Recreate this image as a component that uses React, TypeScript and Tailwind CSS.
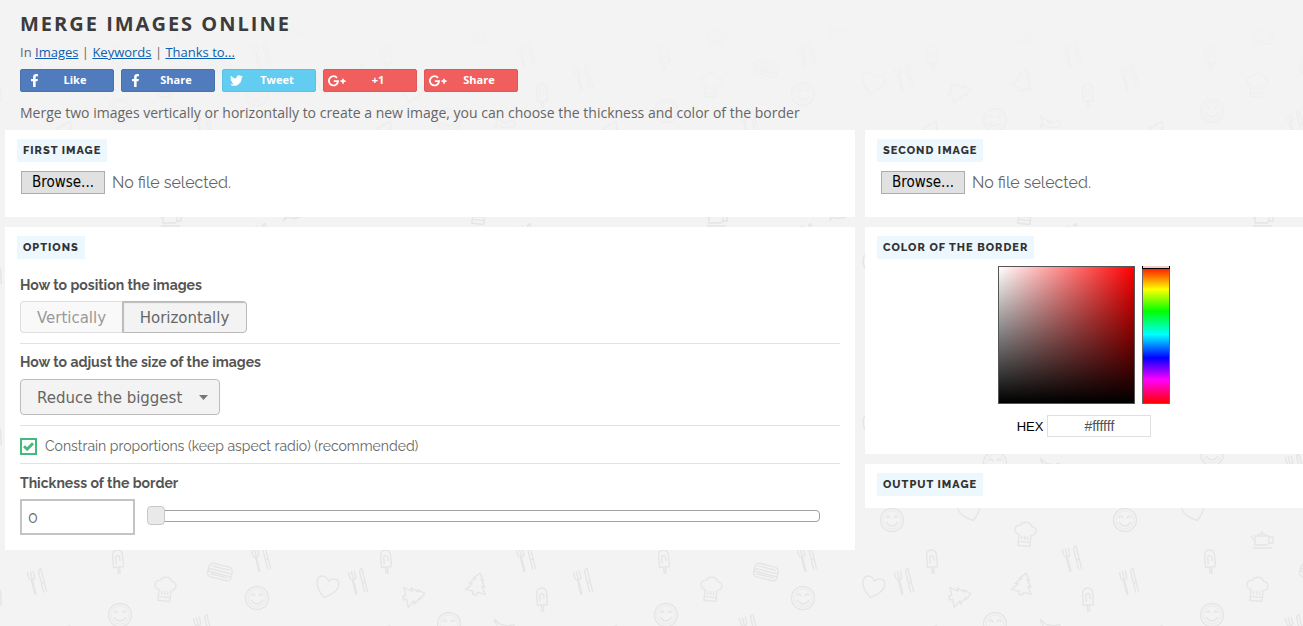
import React, { useState } from "react";
import { FaFacebookF, FaTwitter } from "react-icons/fa";

type Doodle = [kind: string, x: number, y: number, rotation: number];

const TILE_W = 546;
const TILE_H = 161;

const doodles: Doodle[] = [
  ["face", 33, 14, 0],
  ["heart", 102, 4, -18],
  ["face", 346, 14, 0],
  ["heart", 424, 4, -18],
  ["hat", 479, 29, 6],
  ["teapot", 170, 34, 0],
  ["bone", 293, 29, 0],
  ["pop", 118, 55, -5],
  ["fork", 261, 53, -14],
  ["pop", 386, 55, -5],
  ["fork", 526, 53, -14],
  ["burger", 220, 66, 14],
  ["fork", 37, 76, -14],
  ["fork", 358, 76, -14],
  ["heart", 327, 81, 14],
  ["tree", 477, 79, 14],
  ["tree", 413, 90, 78],
  ["hat", 165, 84, 6],
  ["pop", 542, 93, -3],
  ["face", 257, 92, 0],
  ["face", 120, 109, 0],
  ["face", 449, 118, 0],
  ["bone", 504, 120, 10],
  ["fork", 203, 122, -14],
  ["tree", 384, 130, 30],
  ["tree", 64, 130, 30],
];

const copies = [-TILE_W, 0, TILE_W].flatMap((dx) => [-TILE_H, 0, TILE_H].map((dy) => [dx, dy]));

function Shape({ kind }: { kind: string }) {
  switch (kind) {
    case "face":
      return (
        <>
          <circle r="11.5" />
          <circle r="9" opacity="0.5" />
          <path d="M-6 -2q2 -4 4 0M2 -2q2 -4 4 0M-6 2q6 8 12 0" />
        </>
      );
    case "heart":
      return <path d="M0 11C-7 6 -12 1 -11 -5C-10 -11 -3 -11 0 -6C3 -11 10 -11 11 -5C12 1 7 6 0 11Z" />;
    case "hat":
      return (
        <path d="M-6 11V0C-12 -1 -12 -9 -6 -9C-4 -14 4 -14 6 -9C12 -9 12 -1 6 0V11ZM-6 7H6M-3 5V1M0 5V1M3 5V1" />
      );
    case "teapot":
      return (
        <path d="M-7 5V-4H7V2Q7 5 4 5ZM7 -3H11V3H7M-7 1L-11 -4M-5 -4Q0 -9 5 -4M0 -7V-9M-9 8H10" />
      );
    case "pop":
      return <path d="M-5 6V-5Q-5 -11 0 -11Q5 -11 5 -5V6ZM-1 6V12H1V6M-2 3V-4Q0 -7 2 -4V0" />;
    case "burger":
      return <path d="M-12 -1Q-12 -7 -7 -7H7Q12 -7 12 -1ZM-12 -1V2H12V-1M-12 2Q-12 7 -8 7H8Q12 7 12 2M-9 -4H9M-9 4H9" />;
    case "fork":
      return (
        <path d="M-7 -12V-6Q-7 -3 -4 -3Q-1 -3 -1 -6V-12M-4 -12V12M-5 -3V12M4 12V-8Q4 -12 7 -12V12M4 2H7" />
      );
    case "tree":
      return <path d="M0 -12L5 -6H3L8 0H5L10 7H2V10H-2V7H-10L-5 0H-8L-3 -6H-5Z" />;
    default:
      return <path d="M-11 -5L-4 -1H5Q9 -5 11 -1Q12 3 6 4Q0 7 -5 4L-9 7L-7 1ZM-3 1H4" />;
  }
}

function Pattern({ id, offset }: { id: string; offset: number }) {
  return (
    <pattern id={id} width={TILE_W} height={TILE_H} y={offset} patternUnits="userSpaceOnUse">
      <g fill="none" stroke="#e5e5e5" strokeWidth="1.4">
        {doodles.map(([kind, x, y, r], i) =>
          copies.map(([dx, dy]) => (
            <g key={`${i}:${dx}:${dy}`} transform={`translate(${x + dx} ${y + dy}) rotate(${r})`}>
              <Shape kind={kind} />
            </g>
          )),
        )}
      </g>
    </pattern>
  );
}

function Backdrop() {
  return (
    <svg className="absolute inset-0 -z-10 h-full w-full" aria-hidden="true">
      <defs>
        <Pattern id="doodles" offset={23} />
        <Pattern id="doodles-top" offset={2} />
        <linearGradient id="fade" x1="0" y1="0" x2="0" y2="1">
          <stop offset="0" stopColor="#f3f3f3" stopOpacity="0.95" />
          <stop offset="1" stopColor="#f3f3f3" stopOpacity="0.6" />
        </linearGradient>
      </defs>
      <rect y="130" width="100%" height="100%" fill="url(#doodles)" />
      <rect width="100%" height="130" fill="url(#doodles-top)" />
      <rect width="100%" height="130" fill="url(#fade)" />
    </svg>
  );
}

function GooglePlus() {
  return (
    <svg width="18" height="12" viewBox="0 0 18 12" fill="none" stroke="currentColor" strokeWidth="1.8" aria-hidden="true">
      <path d="M9 2.8A4.6 4.6 0 1 0 10.1 6.2H5.8" />
      <path d="M12.5 6.2H17.5M15 3.7V8.7" strokeWidth="1.7" />
    </svg>
  );
}

function ShareButton({ icon, text, tone }: { icon: React.ReactNode; text: string; tone: string }) {
  return (
    <button
      type="button"
      className={`flex h-[23px] w-[94px] items-center rounded-xs border pl-1 text-[11px] font-bold text-white ${tone}`}
    >
      <span className="flex w-[18px] justify-center">{icon}</span>
      <span className="flex-1 pr-[6px] text-center">{text}</span>
    </button>
  );
}

function Card({ title, className = "", children }: { title: string; className?: string; children?: React.ReactNode }) {
  return (
    <section className={`bg-white px-3 pt-[9px] ${className}`}>
      <h2 className="w-fit bg-[#edf7fe] px-[6px] font-['Raleway','Open_Sans',sans-serif] text-[11px] leading-[23px] font-extrabold tracking-[1px] text-[#333] uppercase">
        {title}
      </h2>
      {children}
    </section>
  );
}

function FilePicker({ id, label }: { id: string; label: string }) {
  const [name, setName] = useState("No file selected.");
  return (
    <div className="relative mt-[9px] flex items-start gap-[7px] pl-1">
      <input
        id={id}
        type="file"
        aria-label={label}
        className="peer sr-only"
        onChange={(e) => setName(e.target.files?.[0]?.name ?? "No file selected.")}
      />
      <label
        htmlFor={id}
        className="flex h-[23px] w-[84px] items-center justify-center border border-[#adadad] bg-[#e1e1e1] font-['Tahoma','DejaVu_Sans_Condensed','DejaVu_Sans',sans-serif] text-[15px] text-black peer-focus-visible:outline-2"
      >
        Browse...
      </label>
      <span className="font-['Raleway','Lato',sans-serif] text-base leading-6">{name}</span>
    </div>
  );
}

const groupLabel = "block font-['Raleway','Lato',sans-serif] text-sm leading-5 font-bold text-[#555]";

export default function App() {
  const [direction, setDirection] = useState("h");
  const [thickness, setThickness] = useState("0");
  const [keep, setKeep] = useState(true);
  const [hex, setHex] = useState("#ffffff");

  return (
    <div className="relative isolate min-h-screen bg-[#f3f3f3] font-['Open_Sans',sans-serif] text-[#666]">
      <Backdrop />
      <header className="px-5 pt-2">
        <h1 className="text-xl leading-8 font-bold tracking-[2px] text-[#3c3c3c] uppercase">Merge images online</h1>
        <nav className="mt-[2px] text-[13px] leading-5">
          In{" "}
          <a href="#images" className="text-[#0d5eb0] underline">Images</a> |{" "}
          <a href="#keywords" className="text-[#0d5eb0] underline">Keywords</a> |{" "}
          <a href="#thanks" className="text-[#0d5eb0] underline">Thanks to...</a>
        </nav>
        <div className="mt-[7px] flex gap-[7px]">
          <ShareButton icon={<FaFacebookF size={13} />} text="Like" tone="border-[#4a70b0] bg-[#507cbe]" />
          <ShareButton icon={<FaFacebookF size={13} />} text="Share" tone="border-[#4a70b0] bg-[#507cbe]" />
          <ShareButton icon={<FaTwitter size={13} />} text="Tweet" tone="border-[#5cc0e2] bg-[#63cdf1]" />
          <ShareButton icon={<GooglePlus />} text="+1" tone="border-[#dd5858] bg-[#f05f5e]" />
          <ShareButton icon={<GooglePlus />} text="Share" tone="border-[#dd5858] bg-[#f05f5e]" />
        </div>
        <p className="mt-[10px] pb-[7px] text-sm leading-[21px]">
          Merge two images vertically or horizontally to create a new image, you can choose the thickness and color of the
          border
        </p>
      </header>

      <main className="grid grid-cols-[minmax(0,850fr)_minmax(0,438fr)] items-start gap-[10px] pl-[5px] pb-4">
        <div className="flex flex-col gap-[10px]">
          <Card title="First image" className="pb-[22px]">
            <FilePicker id="first" label="First image" />
          </Card>

          <Card title="Options" className="pb-[15px]">
            <div className="flex flex-col pr-[3px] pl-[3px]">
              <div className="mt-4 border-b border-[#e2e2e2] pb-[10px]">
                <span className={groupLabel}>How to position the images</span>
                <div className="mt-[6px] flex h-8 font-['Verdana','DejaVu_Sans',sans-serif] text-[15px]">
                  <button
                    type="button"
                    aria-pressed={direction === "v"}
                    onClick={() => setDirection("v")}
                    className="w-[102px] rounded-l-sm border border-r-0 border-[#dedede] bg-[#f9f9f9] pt-[2px] text-[#999] aria-pressed:bg-[#f1f1f1] aria-pressed:text-[#666]"
                  >
                    Vertically
                  </button>
                  <button
                    type="button"
                    aria-pressed={direction === "h"}
                    onClick={() => setDirection("h")}
                    className="w-[125px] rounded-r-sm border border-[#dedede] bg-[#f9f9f9] pt-[2px] text-[#999] aria-pressed:border-[#b9b9b9] aria-pressed:bg-[#f3f3f3] aria-pressed:text-[#666] aria-pressed:shadow-[inset_1px_1px_1px_#bbb]"
                  >
                    Horizontally
                  </button>
                </div>
              </div>

              <div className="border-b border-[#e2e2e2] pt-2 pb-[10px]">
                <label htmlFor="fit" className={groupLabel}>
                  How to adjust the size of the images
                </label>
                <div className="relative mt-[7px] w-[200px]">
                  <select
                    id="fit"
                    className="h-9 w-full appearance-none rounded-sm border border-[#bcbcbc] bg-[#f3f3f3] pt-[2px] pl-4 font-['Verdana','DejaVu_Sans',sans-serif] text-[15px] text-[#666]"
                  >
                    <option>Reduce the biggest</option>
                    <option>Enlarge the smallest</option>
                  </select>
                  <svg className="pointer-events-none absolute top-4 right-3" width="9" height="5" viewBox="0 0 9 5" fill="#777" aria-hidden="true">
                    <path d="M0 0H9L4.5 5Z" />
                  </svg>
                </div>
              </div>

              <div className="border-b border-[#e2e2e2] pt-[10px] pb-[6px]">
                <label className="flex items-center gap-2 font-['Raleway','Lato',sans-serif] text-sm leading-[21px]">
                  <span className="relative flex size-[17px] items-center justify-center">
                    <input
                      type="checkbox"
                      checked={keep}
                      onChange={(e) => setKeep(e.target.checked)}
                      className="absolute inset-0 appearance-none border-2 border-[#43b97c] bg-white"
                    />
                    {keep && (
                      <svg className="relative" width="11" height="9" viewBox="0 0 11 9" fill="none" stroke="#43b97c" strokeWidth="2.8" aria-hidden="true">
                        <path d="M1 4.2L4.2 7.2L10 1.2" />
                      </svg>
                    )}
                  </span>
                  Constrain proportions (keep aspect radio) (recommended)
                </label>
              </div>

              <div className="pt-[9px]">
                <label htmlFor="thickness" className={groupLabel}>
                  Thickness of the border
                </label>
                <div className="mt-[6px] flex items-center gap-3 pr-5">
                  <input
                    id="thickness"
                    value={thickness}
                    onChange={(e) => setThickness(e.target.value)}
                    className="h-9 w-[115px] border-2 border-[#c4c4c4] bg-white px-[6px] font-['Raleway','Lato',sans-serif] text-base text-[#666]"
                  />
                  <input
                    type="range"
                    aria-label="Thickness of the border"
                    min="0"
                    max="100"
                    value={Number(thickness) || 0}
                    onChange={(e) => setThickness(e.target.value)}
                    className="mb-[2px] h-5 min-w-0 flex-1 appearance-none bg-transparent [&::-webkit-slider-runnable-track]:h-3 [&::-webkit-slider-runnable-track]:rounded-sm [&::-webkit-slider-runnable-track]:border [&::-webkit-slider-runnable-track]:border-[#a0a0a0] [&::-webkit-slider-runnable-track]:bg-white [&::-webkit-slider-thumb]:-mt-[5px] [&::-webkit-slider-thumb]:-ml-px [&::-webkit-slider-thumb]:h-[19px] [&::-webkit-slider-thumb]:w-[18px] [&::-webkit-slider-thumb]:appearance-none [&::-webkit-slider-thumb]:rounded-sm [&::-webkit-slider-thumb]:border [&::-webkit-slider-thumb]:border-[#c8c8c8] [&::-webkit-slider-thumb]:bg-[#e9e9e9]"
                  />
                </div>
              </div>
            </div>
          </Card>
        </div>

        <div className="flex flex-col gap-[10px]">
          <Card title="Second image" className="pb-[22px]">
            <FilePicker id="second" label="Second image" />
          </Card>

          <Card title="Color of the border" className="pb-[17px]">
            <div className="mt-[7px] flex flex-col items-center">
              <div className="flex gap-[7px]">
                <div className="h-[138px] w-[137px] border border-[#555] bg-[linear-gradient(to_top,#000,transparent),linear-gradient(to_right,#fff,#f00)]" />
                <div className="h-[138px] w-7 border border-t-0 border-[#666] bg-[linear-gradient(to_bottom,#f00,#ff0_17%,#0f0_33%,#0ff_50%,#00f_67%,#f0f_83%,#f00)]">
                  <div className="-mx-px h-[3px] border-x border-b border-black bg-[#f3cccc]" />
                </div>
              </div>
              <div className="mt-[11px] flex items-center gap-1 font-['Liberation_Sans',Arial,sans-serif] text-sm">
                <label htmlFor="hex" className="pt-[2px] text-[13px] text-black">
                  HEX
                </label>
                <input
                  id="hex"
                  value={hex}
                  onChange={(e) => setHex(e.target.value)}
                  className="h-[22px] w-[104px] border border-[#e0e0e0] bg-white text-center text-[#555]"
                />
              </div>
            </div>
          </Card>

          <Card title="Output image" className="pb-3" />
        </div>
      </main>
    </div>
  );
}
